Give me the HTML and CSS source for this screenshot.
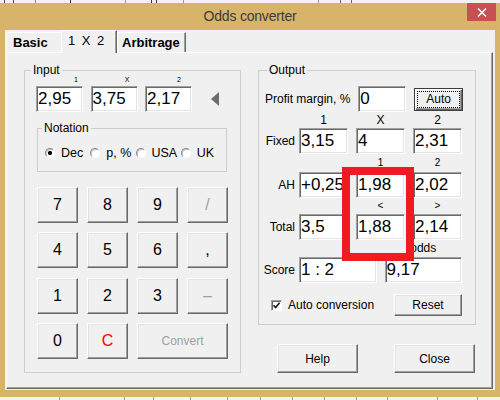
FILE: index.html
```html
<!DOCTYPE html>
<html lang="en">
<head>
<meta charset="utf-8">
<title>Odds converter</title>
<link rel="stylesheet" href="styles.css">
</head>
<body>
<div class="desk desk-top"></div>

<header class="titlebar">
  <span class="title">Odds converter</span>
  <button class="close" aria-label="Close">
    <svg width="10" height="9" viewBox="0 0 10 9"><path d="M1 0.5 L9 8.5 M9 0.5 L1 8.5" stroke="#fff" stroke-width="1.5"/></svg>
  </button>
</header>

<main class="client">
  <nav class="tabs">
    <div class="tab tab-basic">Basic</div>
    <div class="tab tab-active">1 X 2</div>
    <div class="tab tab-arb">Arbitrage</div>
  </nav>

  <section class="panel">
    <fieldset class="group group-input">
      <legend>Input</legend>
      <div class="group-body">
        <div class="in-heads"><span>1</span><span>X</span><span>2</span></div>
        <div class="in-row">
          <div class="edit">2,95</div>
          <div class="edit">3,75</div>
          <div class="edit">2,17</div>
          <svg class="back-arrow" width="8" height="14" viewBox="0 0 8 14"><path d="M8 0 L0 7 L8 14 Z" fill="#6e6e6e"/></svg>
        </div>

        <fieldset class="group group-notation">
          <legend>Notation</legend>
          <div class="group-body">
            <div class="radios">
              <label class="radio checked"><i></i>Dec</label>
              <label class="radio"><i></i>p, %</label>
              <label class="radio"><i></i>USA</label>
              <label class="radio"><i></i>UK</label>
            </div>
          </div>
        </fieldset>

        <div class="keypad">
          <button class="btn key">7</button>
          <button class="btn key">8</button>
          <button class="btn key">9</button>
          <button class="btn key key-dim">/</button>
          <button class="btn key">4</button>
          <button class="btn key">5</button>
          <button class="btn key">6</button>
          <button class="btn key">,</button>
          <button class="btn key">1</button>
          <button class="btn key">2</button>
          <button class="btn key">3</button>
          <button class="btn key key-dim">–</button>
          <button class="btn key">0</button>
          <button class="btn key key-clear">C</button>
          <button class="btn key key-convert">Convert</button>
        </div>
      </div>
    </fieldset>

    <div class="out-col">
      <fieldset class="group group-output">
        <legend>Output</legend>
        <div class="group-body">
          <div class="row row-margin">
            <span class="lbl-left">Profit margin, %</span>
            <div class="edit edit-margin">0</div>
            <button class="btn btn-auto">Auto</button>
          </div>
          <div class="row heads">
            <span class="spacer"></span><span>1</span><span>X</span><span>2</span>
          </div>
          <div class="row row-edit">
            <span class="lbl">Fixed</span>
            <div class="edit">3,15</div><div class="edit">4</div><div class="edit">2,31</div>
          </div>
          <div class="row heads heads-small heads-ah">
            <span class="spacer"></span><span></span><span>1</span><span>2</span>
          </div>
          <div class="row row-edit">
            <span class="lbl">AH</span>
            <div class="edit">+0,25</div><div class="edit">1,98</div><div class="edit">2,02</div>
          </div>
          <div class="row heads heads-small">
            <span class="spacer"></span><span></span><span>&lt;</span><span>&gt;</span>
          </div>
          <div class="row row-edit">
            <span class="lbl">Total</span>
            <div class="edit">3,5</div><div class="edit">1,88</div><div class="edit">2,14</div>
          </div>
          <div class="row heads heads-odds">
            <span class="spacer"></span><span class="half"></span><span class="half">odds</span>
          </div>
          <div class="row row-edit row-score">
            <span class="lbl">Score</span>
            <div class="edit">1 : 2</div><div class="edit">9,17</div>
          </div>
          <div class="row row-auto">
            <label class="check"><i><svg width="9" height="9" viewBox="0 0 9 9"><path d="M1.5 4.2 L3.6 6.5 L7.6 1.8" fill="none" stroke="#111" stroke-width="1.5"/></svg></i>Auto conversion</label>
            <button class="btn btn-reset">Reset</button>
          </div>
        </div>
      </fieldset>

      <div class="dialog-buttons">
        <button class="btn btn-dlg">Help</button>
        <button class="btn btn-dlg">Close</button>
      </div>
    </div>
  </section>
</main>

<div class="desk desk-bottom"></div>

<div class="highlight"></div>
</body>
</html>
```

FILE: styles.css
```css
* {
  box-sizing: border-box;
}

html,
body {
  margin: 0;
}

body {
  width: 500px;
  height: 400px;
  overflow: hidden;
  position: relative;
  display: flex;
  flex-direction: column;
  background: #d8b46b;
  font-family: "Liberation Sans", Arial, sans-serif;
  font-size: 12px;
  color: #000;
}

/* slivers of the desktop behind the window */
.desk {
  flex: none;
  height: 3px;
  background-color: #f2f2f2;
  background-repeat: no-repeat;
  background-size: 1px 3px;
}

.desk-top {
  background-image:
    linear-gradient(#444, #444), linear-gradient(#444, #444),
    linear-gradient(#888, #888), linear-gradient(#333, #333),
    linear-gradient(#999, #999), linear-gradient(#333, #333),
    linear-gradient(#333, #333), linear-gradient(#999, #999),
    linear-gradient(#999, #999), linear-gradient(#666, #666),
    linear-gradient(#666, #666);
  background-position:
    4px 0, 13px 0, 35px 0, 70px 0, 125px 0, 151px 0,
    156px 0, 183px 0, 318px 0, 340px 0, 351px 0;
}

.desk-bottom {
  margin-top: auto;
  background-image:
    linear-gradient(#9a9a9a, #9a9a9a), linear-gradient(#9a9a9a, #9a9a9a),
    linear-gradient(#9a9a9a, #9a9a9a), linear-gradient(#9a9a9a, #9a9a9a),
    linear-gradient(#9a9a9a, #9a9a9a), linear-gradient(#9a9a9a, #9a9a9a),
    linear-gradient(#9a9a9a, #9a9a9a), linear-gradient(#9a9a9a, #9a9a9a),
    linear-gradient(#9a9a9a, #9a9a9a), linear-gradient(#9a9a9a, #9a9a9a),
    linear-gradient(#9a9a9a, #9a9a9a), linear-gradient(#9a9a9a, #9a9a9a);
  background-position:
    59px 0, 124px 0, 153px 0, 190px 0, 227px 0, 260px 0,
    292px 0, 324px 0, 356px 0, 387px 0, 437px 0, 477px 0;
}

/* title bar */
.titlebar {
  flex: none;
  height: 27px;
  display: grid;
  grid-template-columns: 1fr auto 1fr;
  align-items: center;
}

.title {
  grid-column: 2;
  font-size: 14px;
  letter-spacing: -0.2px;
  color: #3d3a33;
  margin-top: -1px;
}

.close {
  grid-column: 3;
  justify-self: end;
  align-self: start;
  width: 29px;
  height: 18px;
  margin-right: 4px;
  padding: 0;
  border: 0;
  background: #c75050;
  display: flex;
  align-items: center;
  justify-content: center;
}

/* client area */
.client {
  flex: none;
  height: 360px;
  margin: 0 5px;
  padding: 0 2px 1px 1px;
  background: #f0f0f0;
  display: flex;
  flex-direction: column;
}

.tabs {
  flex: none;
  height: 22px;
  display: flex;
  align-items: flex-end;
}

.tab {
  height: 20px;
  padding-left: 6px;
  background: #f0f0f0;
  border-top: 1px solid #fff;
  border-left: 1px solid #fff;
  border-right: 1px solid #696969;
  box-shadow: inset -1px 0 #a0a0a0;
  font-size: 13px;
  font-weight: bold;
  line-height: 19px;
  white-space: nowrap;
}

.tab-basic {
  width: 55px;
  border-right: 0;
  box-shadow: none;
}

.tab-active {
  width: 56px;
  height: 23px;
  margin-bottom: -1px;
  position: relative;
  z-index: 1;
  font-weight: normal;
  word-spacing: 3px;
}

.tab-arb {
  width: 69px;
  padding-left: 4px;
}

.panel {
  flex: 1;
  display: flex;
  align-items: flex-start;
  padding: 11px 0 0 17px;
  border: 1px solid;
  border-color: #fff #696969 #696969 #fff;
  box-shadow: inset -1px -1px #a0a0a0;
}

/* group boxes */
.group {
  margin: 0;
  padding: 0;
  min-width: 0;
  border: 1px solid #cdcdcd;
}

.group > legend {
  padding: 0 2px;
  font-size: 12px;
  line-height: 13px;
}

.group-input {
  width: 217px;
}

.group-input > legend {
  margin-left: 6px;
}

.group-input > .group-body {
  padding: 0 12px 13px 12px;
}

.in-heads {
  display: flex;
  gap: 7.5px;
  margin-left: -1px;
  height: 9px;
  font-size: 7px;
  line-height: 6px;
}

.in-heads span {
  width: 47px;
  text-align: right;
}

.in-heads span:nth-child(1) { padding-right: 5px; }
.in-heads span:nth-child(2) { padding-right: 8px; }
.in-heads span:nth-child(3) { padding-right: 11px; }

.in-row {
  display: flex;
  align-items: center;
  gap: 7.5px;
  margin-left: -1px;
  height: 26px;
}

.in-row .edit {
  width: 47px;
}

.back-arrow {
  margin-left: 11px;
}

/* sunken edit boxes */
.edit {
  flex: none;
  height: 26px;
  padding-left: 1px;
  background: #fff;
  border: 1px solid;
  border-color: #a0a0a0 #fff #fff #a0a0a0;
  box-shadow: inset 1px 1px #696969, inset -1px -1px #e3e3e3;
  font-size: 17px;
  line-height: 24px;
  white-space: nowrap;
  overflow: hidden;
}

/* notation */
.group-notation {
  width: 190px;
  margin-top: 10px;
}

.group-notation > legend {
  margin-left: 4px;
}

.group-notation > .group-body {
  padding: 11px 0 11px 7px;
}

.radios {
  display: flex;
  align-items: center;
  height: 14px;
}

.radio {
  width: 46px;
  display: flex;
  align-items: center;
  gap: 6px;
  font-size: 12.5px;
  white-space: nowrap;
}

.radio i {
  flex: none;
  width: 10px;
  height: 10px;
  border-radius: 50%;
  border: 1px solid;
  border-color: #8a8a8a #fff #fff #8a8a8a;
  box-shadow: inset 1px 1px #c4c4c4;
  background: #fff;
}

.radio.checked i {
  background: radial-gradient(circle, #000 0 1.8px, #fff 2.4px);
}

/* raised buttons */
.btn {
  padding: 0;
  margin: 0;
  background: #f0f0f0;
  border: 1px solid;
  border-color: #fff #696969 #696969 #fff;
  box-shadow: inset -1px -1px #a0a0a0, inset 1px 1px #e3e3e3;
  font-family: "Liberation Sans", Arial, sans-serif;
  font-size: 12px;
  color: #000;
}

.keypad {
  margin-top: 15px;
  display: grid;
  grid-template-columns: repeat(4, 41px);
  grid-auto-rows: 36px;
  column-gap: 9px;
  row-gap: 9.33px;
}

.key {
  font-size: 16px;
}

.key-dim {
  color: #a0a0a0;
}

.key-clear {
  color: #ff0000;
}

.key-convert {
  grid-column: span 2;
  font-size: 12px;
  color: #a0a0a0;
}

/* output */
.out-col {
  width: 218px;
  margin-left: 17px;
  display: flex;
  flex-direction: column;
}

.group-output {
  width: 218px;
}

.group-output > legend {
  margin-left: 8px;
}

.group-output > .group-body {
  padding: 9px 12px 8px 0;
}

.row {
  display: flex;
  align-items: center;
  gap: 8px;
}

.row-margin {
  height: 26px;
}

.lbl-left {
  flex: 1;
  padding-left: 6px;
  white-space: nowrap;
}

.edit-margin {
  width: 48px;
}

.btn-auto {
  width: 50px;
  height: 23px;
  border-color: #3c3c3c;
  box-shadow: inset 1px 1px #fff, inset -1px -1px #696969, inset -2px -2px #a0a0a0;
  outline: 1px dotted #000;
  outline-offset: -4px;
}

.heads {
  height: 16px;
  line-height: 16px;
}

.heads span {
  width: 49px;
  text-align: center;
}

.heads .spacer,
.lbl {
  width: 36px;
  margin-right: -4px;
}

.heads-small {
  font-size: 10px;
}

.heads-ah {
  height: 18px;
  line-height: 18px;
}

.heads-odds {
  height: 17px;
  line-height: 17px;
}

.heads .half {
  width: 77.5px;
}

.row-edit {
  height: 26px;
}

.row-edit .edit {
  width: 49px;
}

.row-score .edit {
  width: 77.5px;
}

.lbl {
  text-align: right;
}

.row-auto {
  height: 22px;
  margin-top: 11px;
  padding-left: 12px;
}

.check {
  display: flex;
  align-items: center;
  gap: 6px;
  white-space: nowrap;
}

.check i {
  flex: none;
  width: 11px;
  height: 11px;
  border: 1px solid;
  border-color: #a0a0a0 #fff #fff #a0a0a0;
  box-shadow: inset 1px 1px #696969;
  background: #fff;
  display: flex;
  align-items: center;
  justify-content: center;
}

.btn-reset {
  width: 68px;
  height: 22px;
  margin-left: auto;
  margin-right: 1px;
}

.dialog-buttons {
  display: flex;
  justify-content: flex-end;
  gap: 36px;
  margin-top: 19px;
  padding-right: 1px;
}

.btn-dlg {
  width: 81px;
  height: 29px;
}

/* red marker drawn over the AH / Total middle column */
.highlight {
  position: absolute;
  left: 342px;
  top: 167px;
  width: 72px;
  height: 94px;
  border: 8px solid #ed1c24;
}
```
